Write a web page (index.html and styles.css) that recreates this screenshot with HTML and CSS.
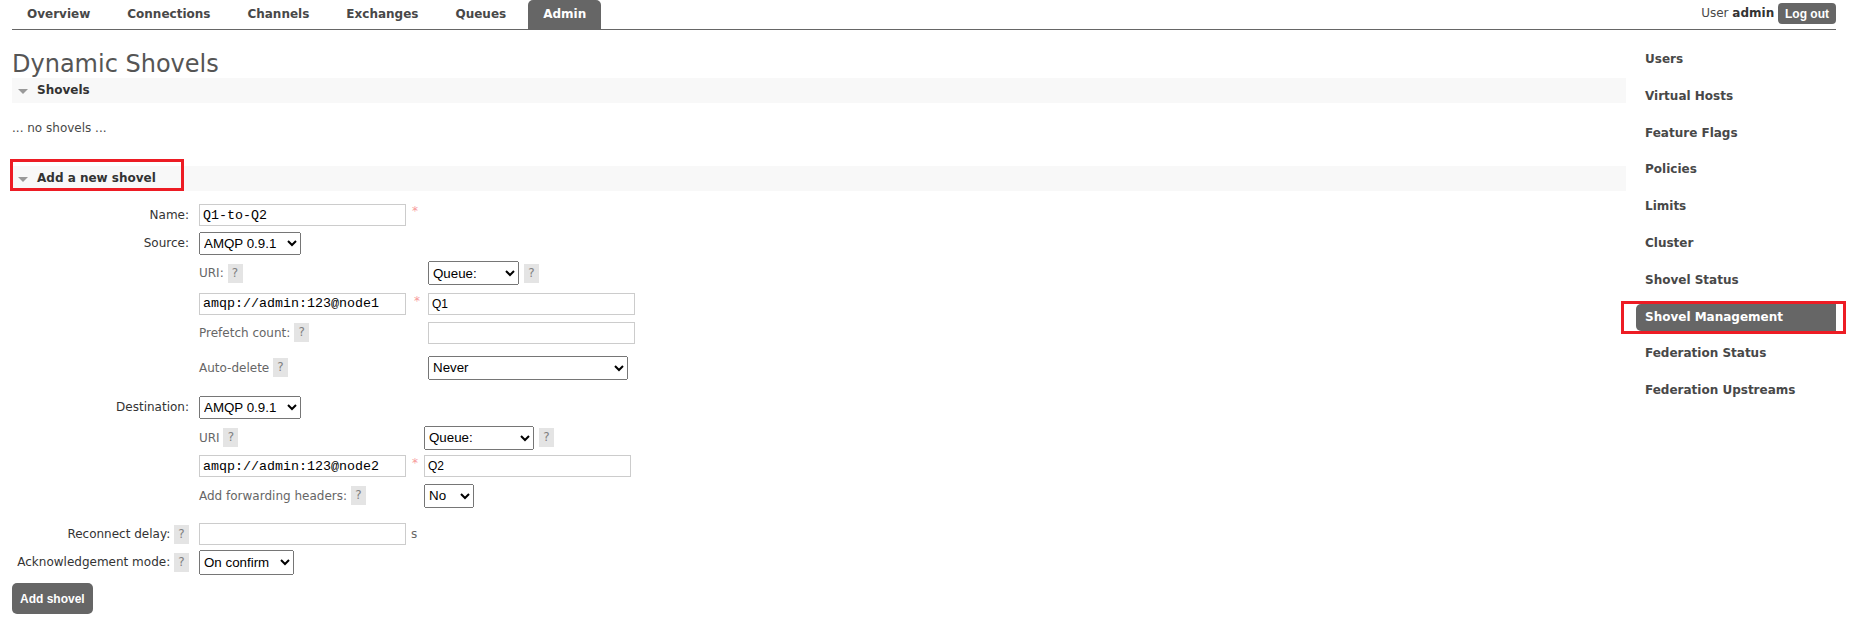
FILE: index.html
```html
<!DOCTYPE html>
<html lang="en">
<head>
    <meta charset="UTF-8">
    <meta name="viewport" content="width=device-width, initial-scale=1.0">
    <title>RabbitMQ Management</title>
    <link rel="stylesheet" href="styles.css">
</head>
<body>
<div class="page">

    <!-- Top tabs and login -->
    <div class="header">
        <ul class="tabs">
            <li><a href="#">Overview</a></li>
            <li><a href="#">Connections</a></li>
            <li><a href="#">Channels</a></li>
            <li><a href="#">Exchanges</a></li>
            <li><a href="#">Queues</a></li>
            <li class="active"><a href="#">Admin</a></li>
        </ul>
        <div class="login">User <b>admin</b> <button class="btn logout">Log out</button></div>
    </div>

    <div class="main">
        <div class="content">
            <h1>Dynamic Shovels</h1>

            <h2 class="section">Shovels</h2>
            <p class="empty">... no shovels ...</p>

            <h2 class="section">Add a new shovel<span class="mark"></span></h2>

            <form class="shovel-form" onsubmit="return false">
                <div class="field">
                    <label>Name:</label>
                    <div class="value">
                        <input type="text" class="text mono" value="Q1-to-Q2"><span class="req">*</span>
                    </div>
                </div>
                <div class="field">
                    <label>Source:</label>
                    <div class="value">
                        <select class="sel-amqp"><option>AMQP 0.9.1</option><option>AMQP 1.0</option></select>
                    </div>
                </div>

                <!-- Source details -->
                <div class="field group">
                    <label></label>
                    <div class="sub">
                        <div class="cell sub-label">URI: <span class="help">?</span></div>
                        <div class="cell">
                            <select class="sel-queue-src"><option>Queue:</option><option>Exchange:</option></select>
                            <span class="help after">?</span>
                        </div>
                        <div class="cell">
                            <input type="text" class="text mono" value="amqp://admin:123@node1"><span class="req fill">*</span>
                        </div>
                        <div class="cell"><input type="text" class="text sans" value="Q1"></div>
                        <div class="cell sub-label">Prefetch count: <span class="help">?</span></div>
                        <div class="cell"><input type="text" class="text"></div>
                        <div class="cell sub-label">Auto-delete <span class="help">?</span></div>
                        <div class="cell">
                            <select class="sel-never"><option>Never</option><option>After initial length transferred</option><option>On confirm</option></select>
                        </div>
                    </div>
                </div>

                <div class="field dest-row">
                    <label>Destination:</label>
                    <div class="value">
                        <select class="sel-amqp"><option>AMQP 0.9.1</option><option>AMQP 1.0</option></select>
                    </div>
                </div>

                <!-- Destination details -->
                <div class="field group">
                    <label></label>
                    <div class="sub dest">
                        <div class="cell sub-label">URI <span class="help">?</span></div>
                        <div class="cell">
                            <select class="sel-queue-dst"><option>Queue:</option><option>Exchange:</option></select>
                            <span class="help after">?</span>
                        </div>
                        <div class="cell">
                            <input type="text" class="text mono" value="amqp://admin:123@node2"><span class="req fill">*</span>
                        </div>
                        <div class="cell"><input type="text" class="text sans" value="Q2"></div>
                        <div class="cell sub-label">Add forwarding headers: <span class="help">?</span></div>
                        <div class="cell">
                            <select class="sel-no"><option>No</option><option>Yes</option></select>
                        </div>
                    </div>
                </div>

                <div class="field spaced">
                    <label>Reconnect delay: <span class="help">?</span></label>
                    <div class="value">
                        <input type="text" class="text"><span class="unit">s</span>
                    </div>
                </div>
                <div class="field ack-row">
                    <label>Acknowledgement mode: <span class="help">?</span></label>
                    <div class="value">
                        <select class="sel-ack"><option>On confirm</option><option>On publish</option><option>No ack</option></select>
                    </div>
                </div>

                <button class="btn add">Add shovel</button>
            </form>
        </div>

        <!-- Admin side menu -->
        <div class="sidebar">
            <ul>
                <li><a href="#">Users</a></li>
                <li><a href="#">Virtual Hosts</a></li>
                <li><a href="#">Feature Flags</a></li>
                <li><a href="#">Policies</a></li>
                <li><a href="#">Limits</a></li>
                <li><a href="#">Cluster</a></li>
                <li><a href="#">Shovel Status</a></li>
                <li class="active"><a href="#">Shovel Management</a><span class="mark"></span></li>
                <li><a href="#">Federation Status</a></li>
                <li><a href="#">Federation Upstreams</a></li>
            </ul>
        </div>
    </div>

</div>
</body>
</html>
```

FILE: styles.css
```css
body {
    margin: 0;
    font: 12px "DejaVu Sans", Verdana, sans-serif;
    color: #484848;
    background: #fff;
}
.page {
    margin-left: 12px;
    width: 1824px;
}

/* header */
.header {
    display: flex;
    justify-content: space-between;
    align-items: flex-start;
    height: 29px;
    border-bottom: 1px solid #666;
}
.tabs {
    list-style: none;
    margin: 0;
    padding: 0;
    display: flex;
    gap: 7px;
}
.tabs a {
    display: block;
    padding: 0 15px;
    line-height: 29px;
    font-weight: bold;
    color: #484848;
    text-decoration: none;
}
.tabs .active a {
    background: #666;
    color: #fff;
    border-radius: 5px 5px 0 0;
}
.login {
    padding-top: 3px;
    line-height: 21px;
}
.login b {
    color: #333;
}
.btn {
    background: #666;
    color: #fff;
    border: 0;
    font: bold 12px "Liberation Sans", Arial, sans-serif;
    cursor: pointer;
}
.btn.logout {
    height: 21px;
    padding: 0 7px;
    border-radius: 4px;
    vertical-align: top;
}
.btn.add {
    height: 31px;
    padding: 0 8px;
    border-radius: 5px;
    margin-top: 8px;
}

/* layout */
.main {
    display: flex;
}
.content {
    flex: 1;
}
.sidebar {
    width: 200px;
    margin-left: 10px;
}

h1 {
    margin: 21px 0 0;
    font-size: 24px;
    font-weight: normal;
    line-height: 27px;
    color: #555;
}
.section {
    position: relative;
    margin: 0;
    height: 25px;
    line-height: 25px;
    padding-left: 25px;
    background: #f8f8f8;
    font-size: 12px;
    color: #333;
}
.section::before {
    content: "";
    position: absolute;
    left: 6px;
    top: 11px;
    border-left: 5px solid transparent;
    border-right: 5px solid transparent;
    border-top: 5px solid #999;
}
.empty {
    margin: 17px 0 30px;
    line-height: 16px;
}

/* red annotation boxes */
.mark {
    position: absolute;
    box-sizing: border-box;
    border: 3px solid #ed1c24;
    pointer-events: none;
}
.section .mark {
    left: -2px;
    top: -7px;
    width: 174px;
    height: 32px;
}
.sidebar .mark {
    left: -15px;
    top: -3px;
    width: 225px;
    height: 33px;
}

/* form */
.shovel-form {
    margin-top: 10px;
}
.field {
    display: flex;
    align-items: center;
    height: 28px;
}
.field > label {
    flex-shrink: 0;
    width: 177px;
    margin-right: 10px;
    text-align: right;
    color: #333;
}
.field.group {
    height: auto;
    align-items: flex-start;
}
.field.dest-row {
    height: 38px;
}
.field.spaced {
    height: 32px;
    margin-top: 10px;
}
.field.ack-row {
    height: 25px;
}
.value {
    display: flex;
    align-items: center;
}
.sub {
    display: grid;
    grid-template-columns: 229px auto;
    grid-template-rows: 32px 29px 29px 41px;
    align-items: center;
}
.sub.dest {
    grid-template-columns: 225px auto;
    grid-template-rows: 23px 34px 25px;
}
.cell {
    display: flex;
    align-items: center;
}
.sub-label {
    color: #666;
    white-space: pre;
}
.help {
    display: inline-block;
    width: 15px;
    height: 19px;
    line-height: 19px;
    text-align: center;
    background: #e4e4e4;
    color: #808080;
}
.help.after {
    margin-left: 5px;
}
.req {
    align-self: flex-start;
    margin-left: 6px;
    color: #f79a9a;
    font-size: 12px;
}
.req.fill {
    flex: 1;
    margin-left: 0;
    text-align: center;
    align-self: auto;
    position: relative;
    top: -3px;
}
.unit {
    margin-left: 5px;
    color: #666;
}

input.text {
    box-sizing: border-box;
    width: 207px;
    height: 22px;
    margin: 0;
    padding: 1px 3px;
    border: 1px solid #ccc;
    color: #000;
    font: 13.33px "Liberation Mono", "Courier New", monospace;
}
input.sans {
    font: 12px "Liberation Sans", Arial, sans-serif;
}
select {
    box-sizing: border-box;
    height: 24px;
    margin: 0;
    color: #000;
    font: 13.33px "Liberation Sans", Arial, sans-serif;
}
.sel-amqp { width: 102px; height: 23px; }
.sel-queue-src { width: 91px; }
.sel-queue-dst { width: 110px; }
.sel-never { width: 200px; }
.sel-no { width: 50px; }
.sel-ack { width: 95px; height: 25px; }

/* side menu */
.sidebar ul {
    list-style: none;
    margin: 16px 0 0;
    padding: 0;
}
.sidebar li {
    position: relative;
    margin-bottom: 9.8px;
}
.sidebar a {
    display: block;
    height: 27px;
    line-height: 27px;
    padding-left: 9px;
    font-weight: bold;
    color: #484848;
    text-decoration: none;
}
.sidebar .active a {
    background: #666;
    color: #fff;
    border-radius: 5px 0 0 5px;
}
```
